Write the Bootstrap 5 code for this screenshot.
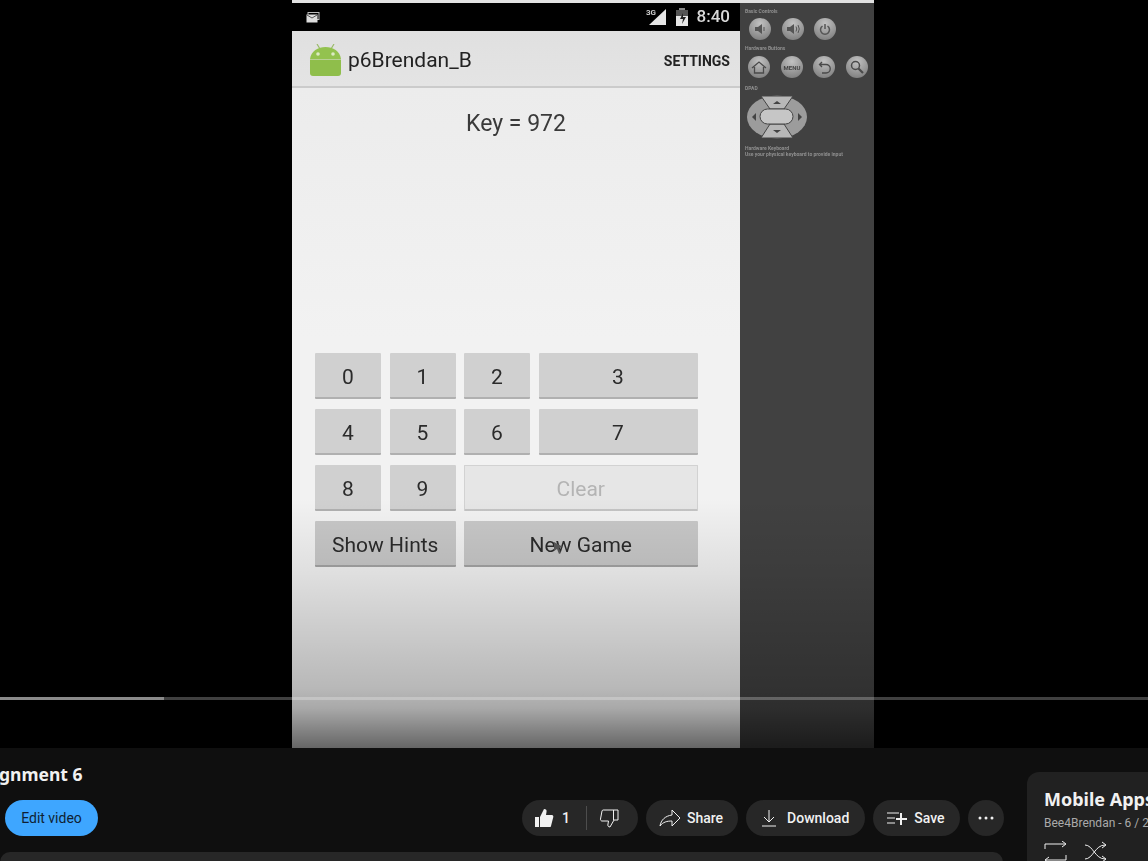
<!DOCTYPE html>
<html lang="en">
<head>
    <meta charset="UTF-8">
    <meta name="viewport" content="width=device-width, initial-scale=1.0">
    <title>Assignment 6</title>
    <link rel="stylesheet" href="https://cdn.jsdelivr.net/npm/bootstrap@5.3.0/dist/css/bootstrap.min.css">
    <style>
        html, body { height: 100%; overflow: hidden; }
        body { background: #0f0f0f; font-family: Roboto, "Liberation Sans", sans-serif; color: #f1f1f1; width: 1148px; height: 861px; }

        /* video */
        .video-stage { height: 748px; background: #000; position: relative; overflow: hidden; }
        .video-frame { width: 582px; height: 748px; margin-left: 292px; padding-top: 3px; background: #e2e2e2; filter: blur(.35px); }
        .phone { width: 448px; background: linear-gradient(#eaeaea, #f2f2f2 45%, #f2f2f2); }
        .status-bar { height: 28px; background: #000; color: #d8d8d8; padding: 0 10px 0 14px; font-size: 17px; font-weight: 500; }
        .app-bar { height: 57px; background: linear-gradient(#e0e0e0, #e4e4e4); border-bottom: 2px solid #cbcbcb; padding: 5px 10px 0 18px; color: #222; }
        .app-logo { margin-top: -3px; }
        .app-name { font-size: 21px; margin-left: 7px; }
        .app-action { font-size: 14px; font-weight: 700; }
        .key-text { font-size: 23px; color: #3a3a3a; text-align: center; margin-top: 22px; line-height: 28px; }
        .key-grid { display: grid; grid-template-columns: 66px 66px 66px 159px; grid-auto-rows: 46px; column-gap: 8.5px; row-gap: 10px; margin: 215px 0 0 23px; width: 383px; }
        .key-btn { background: #d0d0d0; border: 0; border-bottom: 2px solid #b0b0b0; border-radius: 1px; color: #2b2b2b; font-size: 21px; padding: 5px 0 0; font-family: Roboto, sans-serif; }
        .key-btn.dim { background: #e6e6e6; border: 1px solid #d2d2d2; border-bottom: 2px solid #c4c4c4; color: #b4b4b4; grid-column: span 2; }
        .key-btn.wide { grid-column: span 2; }
        .key-btn.dark { background: #c8c8c8; border-bottom-color: #a4a4a4; }
        .mouse-arrow { position: absolute; left: 553px; top: 541px; }

        .emu-panel { width: 134px; background: #414141; padding: 5px 0 0 5px; color: #8f8f8f; font-size: 5px; line-height: 6px; filter: blur(.3px); }
        .emu-label { font-weight: 700; white-space: nowrap; }
        .emu-row { display: flex; gap: 10.5px; margin: 4px 0 5px 4px; }
        .emu-row.hw { margin: 5px 0 7px 3px; }
        .emu-btn { width: 22px; height: 22px; border-radius: 50%; background: radial-gradient(circle at 50% 25%, #c2c2c2, #808080 85%); display: flex; align-items: center; justify-content: center; }
        .dpad { display: block; margin: 4px 0 6px 1px; }

        .player-shade { position: absolute; left: 0; right: 0; bottom: 0; height: 250px; background: linear-gradient(rgba(0,0,0,0) 0, rgba(0,0,0,.08) 30%, rgba(0,0,0,.24) 76%, rgba(0,0,0,.3) 84%, rgba(0,0,0,.58) 100%); }
        .progress-track { position: absolute; left: 0; right: 0; top: 697px; height: 3px; background: rgba(255,255,255,.25); }
        .progress-done { width: 164px; height: 100%; background: #8a8a8a; }

        /* under the video */
        .video-title { font-family: "Noto Sans", sans-serif; font-weight: 700; font-size: 17.500px; line-height: 24px; margin: 14px 0 0 -1px; white-space: nowrap; }
        .row-under { position: relative; height: 36px; margin-top: 14px; }
        .pill { height: 36px; border-radius: 18px; background: #272727; font-size: 14px; font-weight: 500; color: #f1f1f1; border: 0; padding: 0 15px 0 13px; white-space: nowrap; }
        .pill svg { margin-right: 6px; flex: none; }
        .pill-edit { background: #3ea6ff; color: #0f1f33; font-weight: 400; width: 93px; margin-left: 5px; padding: 0; justify-content: center; }
        .actions-bar { margin-left: 424px; gap: 8px; }
        .pill-like { padding: 0 19px 0 12px; }
        .pill-like svg { margin-right: 8px; }
        .pill-like svg:last-child { margin-right: 0; }
        .like-sep { width: 1px; height: 24px; background: #4d4d4d; margin: 0 12px 0 16px; }
        .pill-wide { padding-right: 16px; }
        .pill-wide svg { margin-right: 8px; }
        .pill-more { width: 36px; padding: 0; justify-content: center; }
        .pill-more svg { margin: 0; }
        .desc-strip { position: absolute; left: 0; top: 852px; width: 1003px; height: 20px; background: #272727; border-radius: 12px; }
        .playlist-card { position: absolute; left: 1027px; top: 772px; width: 200px; height: 110px; background: #212121; border-radius: 12px; padding: 15px 0 0 17px; }
        .playlist-name { font-family: "Noto Sans", sans-serif; font-weight: 700; font-size: 18px; line-height: 24px; white-space: nowrap; color: #f1f1f1; }
        .playlist-sub { font-size: 12px; color: #aaa; line-height: 18px; margin-top: 3px; white-space: nowrap; }
        .playlist-tools { margin-top: 9px; gap: 16px; }
    </style>
</head>
<body>
    <div class="video-stage">
        <div class="video-frame d-flex">
            <div class="phone d-flex flex-column">
                <div class="status-bar d-flex align-items-center">
                    <svg width="14" height="11" viewBox="0 0 14 11"><rect x="2" y="0.500" width="11" height="7" fill="none" stroke="#bbb"/><rect x="0.500" y="2.500" width="11" height="8" fill="#ddd"/><path d="M1 3l5 3 5-3" stroke="#555" fill="none"/></svg>
                    <span class="ms-auto d-flex align-items-center">
                        <svg width="21" height="18" viewBox="0 0 21 18"><path d="M20 1v16H3z" fill="#e6e6e6"/><text x="0" y="7" font-size="8" font-weight="700" fill="#ccc" font-family="Roboto">3G</text></svg>
                        <svg class="ms-2" width="14" height="18" viewBox="0 0 14 18"><rect x="4" y="0" width="6" height="2" fill="#888"/><rect x="1" y="2" width="12" height="6" fill="#555"/><rect x="1" y="8" width="12" height="10" fill="#e6e6e6"/><path d="M8 5l-3 6h3l-1 5 4-7H8z" fill="#222"/></svg>
                        <span class="ms-2">8:40</span>
                    </span>
                </div>
                <div class="app-bar d-flex align-items-center">
                    <svg class="app-logo" width="31" height="32" viewBox="0 0 31 32"><path d="M7 0l3 5M24 0l-3 5" stroke="#9aba6a" stroke-width="1.200"/><path d="M0 15C1 7 8 3 15.500 3S30 7 31 15z" fill="#93c24f"/><circle cx="8" cy="10" r="1.800" fill="#dcebc4"/><circle cx="23" cy="10" r="1.800" fill="#dcebc4"/><path d="M0 15.500h31V29q0 3-3 3H3q-3 0-3-3z" fill="#8fbe4b"/></svg>
                    <span class="app-name">p6Brendan_B</span>
                    <span class="app-action ms-auto">SETTINGS</span>
                </div>
                <div class="key-text">Key = 972</div>
                <div class="key-grid">
                    <button class="key-btn">0</button><button class="key-btn">1</button><button class="key-btn">2</button><button class="key-btn">3</button>
                    <button class="key-btn">4</button><button class="key-btn">5</button><button class="key-btn">6</button><button class="key-btn">7</button>
                    <button class="key-btn">8</button><button class="key-btn">9</button><button class="key-btn dim">Clear</button>
                    <button class="key-btn wide dark">Show Hints</button><button class="key-btn wide dark">New Game</button>
                </div>
            </div>
            <div class="emu-panel">
                <div class="emu-label">Basic Controls</div>
                <div class="emu-row">
                    <div class="emu-btn"><svg width="12" height="12" viewBox="0 0 12 12" fill="#555"><path d="M1 4h3l4-3v10L4 8H1z"/><path d="M10 4v4" stroke="#555"/></svg></div>
                    <div class="emu-btn"><svg width="14" height="12" viewBox="0 0 14 12" fill="#555"><path d="M1 4h3l4-3v10L4 8H1z"/><path d="M10 3.500q1.500 2.500 0 5M12 2q2.500 4 0 8" stroke="#555" fill="none"/></svg></div>
                    <div class="emu-btn"><svg width="12" height="12" viewBox="0 0 12 12" fill="none" stroke="#555" stroke-width="1.500"><path d="M3.500 3a4.500 4.500 0 1 0 5 0M6 1v5"/></svg></div>
                </div>
                <div class="emu-label">Hardware Buttons</div>
                <div class="emu-row hw">
                    <div class="emu-btn"><svg width="16" height="13" viewBox="0 0 16 13" fill="none" stroke="#4a4a4a" stroke-width="1.300"><path d="M1 7l7-6 7 6M3.500 6v6h9V6"/></svg></div>
                    <div class="emu-btn"><svg width="20" height="8" viewBox="0 0 20 8"><text x="10" y="6.500" text-anchor="middle" font-size="6" font-weight="700" fill="#444" font-family="Roboto">MENU</text></svg></div>
                    <div class="emu-btn"><svg width="13" height="13" viewBox="0 0 13 13" fill="none" stroke="#4a4a4a" stroke-width="1.300"><path d="M4 1L1.500 3.500 4 6M2 3.500h6a4 4 0 0 1 0 8.500H4"/></svg></div>
                    <div class="emu-btn"><svg width="14" height="14" viewBox="0 0 14 14" fill="none" stroke="#4a4a4a" stroke-width="1.500"><circle cx="5.500" cy="5.500" r="4"/><path d="M8.500 8.500l4.500 4.500" stroke-width="2.200"/></svg></div>
                </div>
                <div class="emu-label">DPAD</div>
                <svg class="dpad" width="62" height="44" viewBox="0 0 62 44">
                    <ellipse cx="31" cy="22" rx="30" ry="21.500" fill="#9c9c9c"/>
                    <path d="M15 1h32l-9 13H24zM24 29h14l9 14H15z" fill="#b8b8b8"/>
                    <path d="M15 1h32l-9 13H24zM24 29h14l9 14H15z" fill="none" stroke="#444"/>
                    <path d="M31 6l-4 3h8zM31 38l-4-3h8zM6 22l4-4v8zM56 22l-4-4v8z" fill="#444"/>
                    <rect x="14" y="14" width="33" height="15" rx="7.500" fill="#c6c6c6" stroke="#444"/>
                </svg>
                <div class="emu-label">Hardware Keyboard</div>
                <div class="emu-label">Use your physical keyboard to provide input</div>
            </div>
        </div>
        <div class="player-shade"></div>
        <svg class="mouse-arrow" width="11" height="14" viewBox="0 0 11 14"><path d="M1 1l9 5-4 1 2 5-2 1-2-5-3 2z" fill="#555"/></svg>
        <div class="progress-track"><div class="progress-done"></div></div>
    </div>

    <div class="video-title">gnment 6</div>
    <div class="row-under d-flex align-items-center">
        <div class="pill pill-edit d-flex align-items-center">Edit video</div>
        <div class="actions-bar d-flex">
            <div class="pill pill-like d-flex align-items-center">
                <svg width="20" height="20" viewBox="0 0 20 20"><path d="M1 9h4v10H1zM6 9l4-8c2 0 3 1 2.500 3L12 7h6c1 0 1.500 1 1.300 2L17 18c0 .6-.6 1-1 1H6z" fill="#f1f1f1"/></svg>
                <span>1</span>
                <span class="like-sep"></span>
                <svg width="20" height="20" viewBox="0 0 20 20" fill="none" stroke="#f1f1f1"><path d="M19 2v10h-4L11 19c-2 0-2.500-1.500-2-3l.5-3H3c-1 0-1.700-1-1.500-2L3 3c.2-.7.700-1 1.200-1zM14.500 2v10"/></svg>
            </div>
            <div class="pill d-flex align-items-center">
                <svg width="22" height="20" viewBox="0 0 22 20" fill="none" stroke="#f1f1f1"><path d="M13 2l8 8-8 8v-5C8 13 4 14 1 18c1-6 5-10 12-11z"/></svg>Share
            </div>
            <div class="pill pill-wide d-flex align-items-center">
                <svg width="20" height="20" viewBox="0 0 20 20" fill="none" stroke="#f1f1f1"><path d="M10 2v12M5 9l5 5 5-5M3 18h14"/></svg>Download
            </div>
            <div class="pill d-flex align-items-center">
                <svg width="22" height="20" viewBox="0 0 22 20" fill="none" stroke="#f1f1f1"><path d="M1 5h12M1 10h8M1 15h8"/><path d="M15 5v12M10 11h11" stroke-width="2"/></svg>Save
            </div>
            <div class="pill pill-more d-flex align-items-center">
                <svg width="16" height="4" viewBox="0 0 16 4" fill="#f1f1f1"><circle cx="2" cy="2" r="1.500"/><circle cx="8" cy="2" r="1.500"/><circle cx="14" cy="2" r="1.500"/></svg>
            </div>
        </div>
    </div>

    <div class="desc-strip"></div>
    <div class="playlist-card">
        <div class="playlist-name">Mobile Apps</div>
        <div class="playlist-sub">Bee4Brendan - 6 / 27</div>
        <div class="playlist-tools d-flex">
            <svg width="24" height="24" viewBox="0 0 24 24" fill="none" stroke="#f1f1f1"><path d="M1 8V3h20M18 0l4 3-4 3M22 14v5H2M5 16l-4 3 4 3"/></svg>
            <svg width="24" height="24" viewBox="0 0 24 24" fill="none" stroke="#f1f1f1"><path d="M1 4c8 0 10 14 20 14M1 18c8 0 10-14 20-14M18 1l4 3-4 3M18 15l4 3-4 3"/></svg>
        </div>
    </div>

    <script src="https://cdn.jsdelivr.net/npm/bootstrap@5.3.0/dist/js/bootstrap.bundle.min.js"></script>
</body>
</html>
